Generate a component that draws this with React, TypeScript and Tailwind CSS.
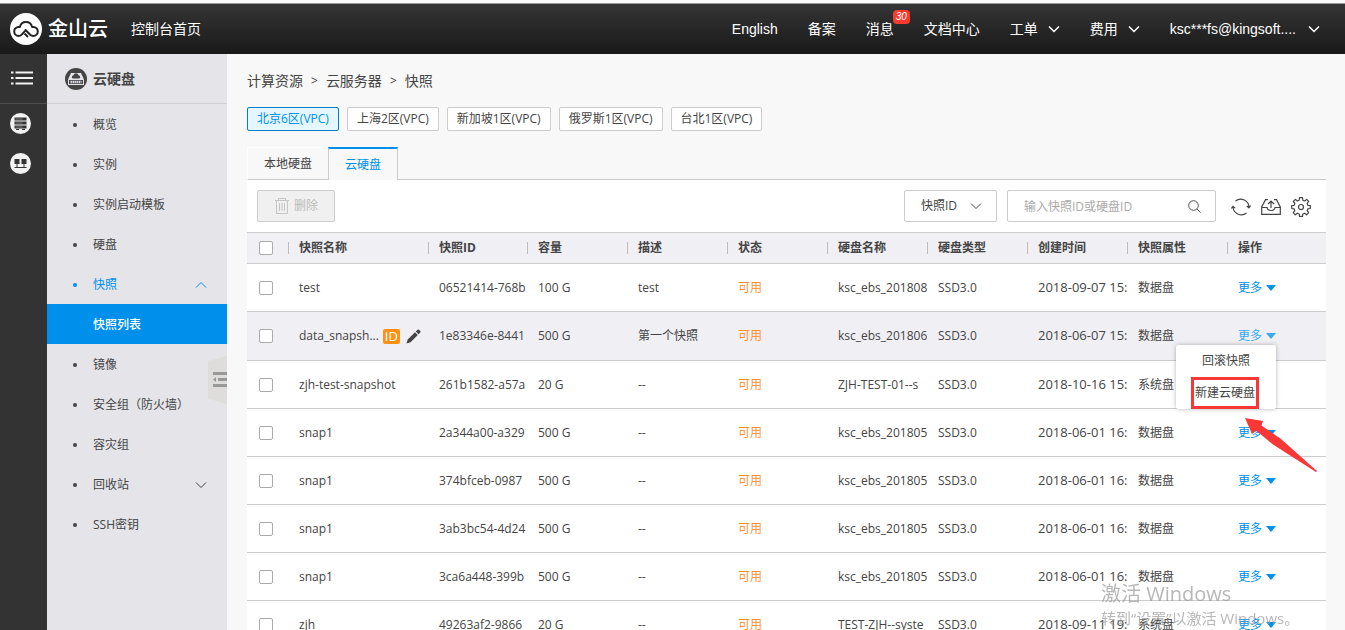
import type { ReactNode } from "react";

type Snapshot = {
  name: string;
  id: string;
  size: string;
  desc: string;
  disk: string;
  time: string;
  kind: string;
  active?: boolean;
};

const snapshots: Snapshot[] = [
  { name: "test", id: "06521414-768b", size: "100 G", desc: "test", disk: "ksc_ebs_201808", time: "2018-09-07 15:", kind: "数据盘" },
  { name: "data_snapsh...", id: "1e83346e-8441", size: "500 G", desc: "第一个快照", disk: "ksc_ebs_201806", time: "2018-06-07 15:", kind: "数据盘", active: true },
  { name: "zjh-test-snapshot", id: "261b1582-a57a", size: "20 G", desc: "--", disk: "ZJH-TEST-01--s", time: "2018-10-16 15:", kind: "系统盘" },
  { name: "snap1", id: "2a344a00-a329", size: "500 G", desc: "--", disk: "ksc_ebs_201805", time: "2018-06-01 16:", kind: "数据盘" },
  { name: "snap1", id: "374bfceb-0987", size: "500 G", desc: "--", disk: "ksc_ebs_201805", time: "2018-06-01 16:", kind: "数据盘" },
  { name: "snap1", id: "3ab3bc54-4d24", size: "500 G", desc: "--", disk: "ksc_ebs_201805", time: "2018-06-01 16:", kind: "数据盘" },
  { name: "snap1", id: "3ca6a448-399b", size: "500 G", desc: "--", disk: "ksc_ebs_201805", time: "2018-06-01 16:", kind: "数据盘" },
  { name: "zjh", id: "49263af2-9866", size: "20 G", desc: "--", disk: "TEST-ZJH--syste", time: "2018-09-11 19:", kind: "系统盘" },
];

const columns = ["快照名称", "快照ID", "容量", "描述", "状态", "硬盘名称", "硬盘类型", "创建时间", "快照属性", "操作"];

const regions = ["北京6区(VPC)", "上海2区(VPC)", "新加坡1区(VPC)", "俄罗斯1区(VPC)", "台北1区(VPC)"];

function Chevron({ up = false, className = "" }: { up?: boolean; className?: string }) {
  return (
    <svg className={className} width="12" height="8" viewBox="0 0 12 8" fill="none" stroke="currentColor" aria-hidden="true">
      <path d={up ? "M1 6.5 6 1.5l5 5" : "M1 1.5l5 5 5-5"} />
    </svg>
  );
}

function Logo() {
  return (
    <a href="#" className="flex items-center gap-1.5 text-white">
      <svg width="32" height="32" viewBox="0 0 32 32" aria-hidden="true">
        <circle cx="16" cy="16" r="16" fill="#fff" />
        <path
          d="M15.500 17l4.700 4.700c1 .9 2 1.200 3.100 1.200a4.500 4.500 0 0 0 0-9H22a6.100 6.100 0 0 0-12 0H8.700a4.500 4.500 0 0 0 0 9c1.400 0 2.400-.5 3.300-1.500l3.500-4"
          fill="none"
          stroke="#222"
          strokeWidth="2"
          strokeLinecap="round"
          strokeLinejoin="round"
        />
        <path d="M14.500 20.500l3.500 3.500" stroke="#222" strokeWidth="2" />
      </svg>
      <span className="text-xl leading-8 font-medium">金山云</span>
    </a>
  );
}

function TopBar() {
  return (
    <header className="flex h-[54px] shrink-0 flex-col">
      <div className="h-[3px] bg-[#fafafa]" />
      <nav className="flex flex-1 items-center border-t border-[#999] bg-linear-to-b from-[#353535] to-[#191919] pr-[25px] pl-2.5 font-['Liberation_Sans','Noto_Sans_CJK_SC',sans-serif] text-sm text-white">
        <Logo />
        <a href="#" className="ml-[23px]">控制台首页</a>
        <div className="ml-auto flex items-center gap-[30px]">
          <a href="#">English</a>
          <a href="#">备案</a>
          <a href="#" className="relative">
            消息
            <span className="absolute -top-[9px] left-[27px] h-3.5 rounded-sm bg-[#f93a2f] px-[3px] text-[10px] leading-3.5 italic">30</span>
          </a>
          <a href="#">文档中心</a>
          <a href="#" className="flex items-center gap-2.5">工单<Chevron className="stroke-[1.5]" /></a>
          <a href="#" className="flex items-center gap-2.5">费用<Chevron className="stroke-[1.5]" /></a>
          <a href="#" className="flex items-center gap-3">ksc***fs@kingsoft....<Chevron className="stroke-[1.5]" /></a>
        </div>
      </nav>
    </header>
  );
}

function Rail() {
  return (
    <div className="flex w-[47px] shrink-0 flex-col items-center bg-[#333]">
      <button type="button" aria-label="菜单" className="flex h-[50px] w-full items-center justify-center border-b border-[#4d4d4d] pr-1 pb-0.5">
        <svg width="22" height="14" viewBox="0 0 22 14" stroke="#f2f2f2" strokeWidth="2" aria-hidden="true">
          <path d="M0 1.500h2.500M0 7h2.500M0 12.500h2.500M4.500 1.500H22M4.500 7H22M4.500 12.500H22" />
        </svg>
      </button>
      <button type="button" aria-label="云服务器" className="flex h-10 w-full items-center justify-center pr-1.5 pb-0.5">
        <svg width="21" height="21" viewBox="0 0 21 21" aria-hidden="true">
          <circle cx="10.500" cy="10.500" r="10.500" fill="#f2f2f2" />
          <path d="M4.500 4.500h12v3h-12zM4.500 8.500h12v3h-12zM4.500 12.500h12v3h-12z" fill="#333" />
          <path d="M5.500 6h7M5.500 10h7M5.500 14h7" stroke="#aaa" strokeWidth=".6" />
          <path d="M6 16.500h9" stroke="#333" strokeDasharray="3 3" />
        </svg>
      </button>
      <button type="button" aria-label="网络" className="flex h-10 w-full items-center justify-center pr-1.5 pb-0.5">
        <svg width="21" height="21" viewBox="0 0 21 21" aria-hidden="true">
          <circle cx="10.500" cy="10.500" r="10.500" fill="#f2f2f2" />
          <path d="M4.500 6h5v5h-5zM11.500 6h5v5h-5z" fill="#333" />
          <path d="M7 11v3.500M14 11v3.500M4.500 14.500h12" stroke="#333" />
        </svg>
      </button>
    </div>
  );
}

function NavItem({ children, open, selected }: { children: ReactNode; open?: boolean; selected?: boolean }) {
  return (
    <li>
      <a href="#" className={`flex h-10 items-center pt-0.5 pr-5 pl-6.5 ${selected ? "text-[#0090eb]" : ""}`}>
        <span className="size-1 rounded-full bg-current" />
        <span className="ml-4">{children}</span>
        {open !== undefined && <Chevron up={open} className="ml-auto" />}
      </a>
    </li>
  );
}

function Sidebar() {
  return (
    <aside className="relative w-[180px] shrink-0 bg-[#e4e4e9] text-xs text-[#444]">
      <h2 className="flex h-[50px] items-center gap-1.5 border-b border-[#d0d0d4] pl-4.5 text-sm font-bold">
        <svg width="22" height="22" viewBox="0 0 22 22" aria-hidden="true">
          <circle cx="11" cy="11" r="11" fill="#444" />
          <path d="M6 5h10l3 6.500v5.500h-16v-5.500z" fill="#e4e4e9" />
          <path d="M8 10.500a1.700 1.700 0 0 1 .5-3.300 2.600 2.600 0 0 1 5 0 1.700 1.700 0 0 1 .5 3.300z" fill="#444" />
          <path d="M4 12h14v4h-14z" fill="#444" />
          <path d="M5.500 14h11" stroke="#d8d8e0" strokeWidth="2.500" strokeDasharray="1.500 .5" />
        </svg>
        云硬盘
      </h2>
      <ul>
        <NavItem>概览</NavItem>
        <NavItem>实例</NavItem>
        <NavItem>实例启动模板</NavItem>
        <NavItem>硬盘</NavItem>
        <NavItem open selected>快照</NavItem>
        <li>
          <a href="#" className="flex h-10 items-center bg-[#0090eb] pt-0.5 pl-11.5 font-medium text-white">快照列表</a>
        </li>
        <NavItem>镜像</NavItem>
        <NavItem>安全组（防火墙）</NavItem>
        <NavItem>容灾组</NavItem>
        <NavItem open={false}>回收站</NavItem>
        <NavItem>SSH密钥</NavItem>
      </ul>
      <button type="button" aria-label="收起菜单" className="absolute top-[302px] right-0">
        <svg width="19" height="48" viewBox="0 0 19 48" aria-hidden="true">
          <path d="M0 5 19 0v48L0 42.500z" fill="#dfdcdc" />
          <path d="M5 16h14v3H5zM10 22h9v3h-9zM5 28h14v3H5zM5 23.500 8 21v5z" fill="#999" />
        </svg>
      </button>
    </aside>
  );
}

function Toolbar() {
  return (
    <div className="flex h-[52px] items-center pr-[15px] pl-2.5 text-xs">
      <button type="button" disabled className="flex h-8 w-[78px] items-center justify-center gap-1 rounded-xs border border-[#ccc] bg-[#f0f0f0] text-[#bbb]">
        <svg width="16" height="18" viewBox="0 0 16 18" fill="none" stroke="#c4c4c4" aria-hidden="true">
          <path d="M1 3.500h14M4.500 3.500v-2h7v2M2.500 6.500v10h11v-10M2.500 3.500v3M13.500 3.500v3M5.500 6v8M8 6v8M10.500 6v8" />
        </svg>
        删除
      </button>
      <div className="relative ml-auto">
        <select aria-label="搜索字段" className="h-8 w-[93px] appearance-none rounded-xs border border-[#ccc] bg-white pl-4">
          <option>快照ID</option>
        </select>
        <Chevron className="pointer-events-none absolute top-3 right-[15px]" />
      </div>
      <div className="relative ml-2.5">
        <input type="text" aria-label="搜索" placeholder="输入快照ID或硬盘ID" className="h-8 w-[209px] rounded-xs border border-[#ccc] bg-white pr-9 pl-4 placeholder:text-[#aaa]" />
        <svg className="absolute top-2.5 right-[15px] text-[#555]" width="13" height="13" viewBox="0 0 13 13" fill="none" stroke="currentColor" aria-hidden="true">
          <circle cx="5.500" cy="5.500" r="4.800" />
          <path d="M9 9l3.500 3.500" />
        </svg>
      </div>
      <div className="ml-[15px] flex gap-2.5 pt-0.5 text-[#444]">
        <button type="button" aria-label="刷新">
          <svg width="20" height="20" viewBox="0 0 20 20" fill="none" stroke="currentColor" strokeWidth="1.200" aria-hidden="true">
            <path d="M4.500 4A8.300 8.300 0 0 1 18 10.500M15.500 16A8.300 8.300 0 0 1 2 9.500M.3 11.500 2 9.300l2.200 1.800M15.800 9l2.200 1.800L19.700 8.500" />
          </svg>
        </button>
        <button type="button" aria-label="导出">
          <svg width="20" height="20" viewBox="0 0 20 20" fill="none" stroke="currentColor" strokeWidth="1.200" aria-hidden="true">
            <path d="M7 2.700H4.500L.7 10v7.300h18.600V10L15.500 2.700H13M.7 10.500H6c.3 2 1.900 3 4 3s3.700-1 4-3h5.300M10 11V4.500M7 7l3-3 3 3" />
          </svg>
        </button>
        <button type="button" aria-label="设置">
          <svg width="20" height="20" viewBox="0 0 20 20" fill="none" stroke="currentColor" strokeWidth="1.200" strokeLinejoin="round" aria-hidden="true">
            <path d="M8.500.7h3l.3 2.500 1.900.8 2-1.600 2 2.100-1.500 1.900.7 1.900 2.400.3v2.900l-2.400.3-.8 1.900 1.600 2-2.100 2.100-1.900-1.600-1.900.8-.3 2.400h-3l-.3-2.400-1.900-.8-2 1.600-2-2.100 1.500-2-.7-1.900-2.400-.3V8.600l2.400-.3.8-1.900-1.600-1.900 2.100-2.100 1.900 1.600 1.900-.8z" />
            <circle cx="10" cy="10" r="2.500" />
          </svg>
        </button>
      </div>
    </div>
  );
}

function RowMenu() {
  return (
    <div className="absolute top-[33px] -left-[51px] z-10 w-25 rounded-xs bg-white text-center shadow-[0_0_4px_rgba(0,0,0,0.3)]">
      <button type="button" className="block h-8 w-full">回滚快照</button>
      <button type="button" className="ml-[15px] block h-8 w-[68px] border-3 border-[#f93737] whitespace-nowrap">新建云硬盘</button>
      <svg className="absolute top-[72px] left-[69px]" width="73" height="56" viewBox="0 0 73 56" aria-hidden="true">
        <path d="M0 1 18 4 16.500 8.500 36 22 72 54 71 55 28 27.500 11 13.500 7 17z" fill="#f93737" />
      </svg>
    </div>
  );
}

function SnapshotRow({ row }: { row: Snapshot }) {
  return (
    <tr className={`border-b border-[#ccc] ${row.active ? "h-[49px] bg-[#f0eff4]" : "h-12"}`}>
      <td className="pl-3">
        <input type="checkbox" aria-label={row.name} className="block size-3.5 appearance-none rounded-xs border border-[#aaa] bg-white" />
      </td>
      <td className="pl-[11px]">
        <div className="flex items-center">
          {row.name}
          {row.active && (
            <>
              <span className="ml-1 h-[15px] w-[17px] rounded-xs bg-[#ff9015] text-center text-[13px] leading-[15px] text-white">ID</span>
              <button type="button" aria-label="编辑" className="ml-1.5">
                <svg width="15" height="15" viewBox="0 0 15 15" fill="#444" aria-hidden="true">
                  <path d="M.5 14.500l1.200-4L9 3.200 11.800 6l-7.300 7.300zM9.800 2.400 11.500.7q.8-.6 1.500 0l1.300 1.300q.6.7 0 1.500l-1.700 1.700z" />
                </svg>
              </button>
            </>
          )}
        </div>
      </td>
      <td className="pl-[11px]"><div className="overflow-hidden">{row.id}</div></td>
      <td className="pl-[11px]">{row.size}</td>
      <td className="pl-[11px]">{row.desc}</td>
      <td className="pl-[11px] text-[#ff9030]">可用</td>
      <td className="pl-[11px]"><div className="overflow-hidden">{row.disk}</div></td>
      <td className="pl-[11px]">SSD3.0</td>
      <td className="pl-[11px] text-[13px]"><div className="overflow-hidden">{row.time}</div></td>
      <td className="pl-[11px]">{row.kind}</td>
      <td className="relative pl-[11px]">
        <button type="button" className={`flex items-center gap-1 ${row.active ? "text-[#3aaaf0]" : "text-[#0090eb]"}`}>
          更多
          <svg width="10" height="6" viewBox="0 0 10 6" fill="currentColor" aria-hidden="true">
            <path d="M0 0h10L5 6z" />
          </svg>
        </button>
        {row.active && <RowMenu />}
      </td>
    </tr>
  );
}

function SnapshotTable() {
  return (
    <table className="w-full table-fixed text-left text-xs whitespace-nowrap">
      <colgroup>
        <col className="w-[41px]" />
        <col className="w-[140px]" />
        <col className="w-[99px]" />
        <col className="w-[100px]" />
        <col className="w-[100px]" />
        <col className="w-[100px]" />
        <col className="w-[100px]" />
        <col className="w-[100px]" />
        <col className="w-[100px]" />
        <col className="w-[100px]" />
        <col />
      </colgroup>
      <thead>
        <tr className="h-[31px] border-y border-[#ccc] bg-[#f0eff4]">
          <th className="pl-3">
            <input type="checkbox" aria-label="全选" className="block size-3.5 appearance-none rounded-xs border border-[#aaa] bg-white" />
          </th>
          {columns.map((c) => (
            <th key={c} className="p-0">
              <div className="border-l border-[#bbb] pl-2.5 leading-3">{c}</div>
            </th>
          ))}
        </tr>
      </thead>
      <tbody>
        {snapshots.map((row) => (
          <SnapshotRow key={row.id} row={row} />
        ))}
      </tbody>
    </table>
  );
}

export default function App() {
  return (
    <div className="flex h-screen flex-col overflow-hidden bg-[#f8f8f8] font-['Open_Sans','Noto_Sans_CJK_SC',sans-serif] text-[#444]">
      <TopBar />
      <div className="flex min-h-0 flex-1">
        <Rail />
        <Sidebar />
        <main className="min-w-0 flex-1 overflow-hidden pr-[19px] pl-5">
          <div className="flex h-[53px] items-center gap-2 text-sm">
            <a href="#">计算资源</a>
            <span className="text-xs">&gt;</span>
            <a href="#">云服务器</a>
            <span className="text-xs">&gt;</span>
            <span>快照</span>
          </div>
          <div className="flex gap-2 text-xs">
            {regions.map((r, i) => (
              <button
                key={r}
                type="button"
                className={`h-6 rounded-xs border px-[9px] ${i === 0 ? "border-[#0080cc] bg-[#e4f6ff] text-[#0090eb]" : "border-[#ccc] bg-white"}`}
              >
                {r}
              </button>
            ))}
          </div>
          <div className="mt-4 flex h-[33px] text-xs">
            <button type="button" className="w-[81px] border-t border-b border-l border-t-white border-b-[#ccc] border-l-white">本地硬盘</button>
            <button type="button" className="w-[70px] border-x border-t-2 border-x-[#ccc] border-t-[#0090eb] text-[#0090eb]">云硬盘</button>
            <div className="flex-1 border-b border-[#ccc]" />
          </div>
          <section className="bg-white">
            <Toolbar />
            <SnapshotTable />
          </section>
        </main>
      </div>
      <div className="pointer-events-none fixed right-[43px] bottom-0 z-20 w-[201px] whitespace-nowrap text-[#999]/70">
        <p className="text-xl leading-6">激活 Windows</p>
        <p className="text-[15px] leading-6">转到“设置”以激活 Windows。</p>
      </div>
    </div>
  );
}
